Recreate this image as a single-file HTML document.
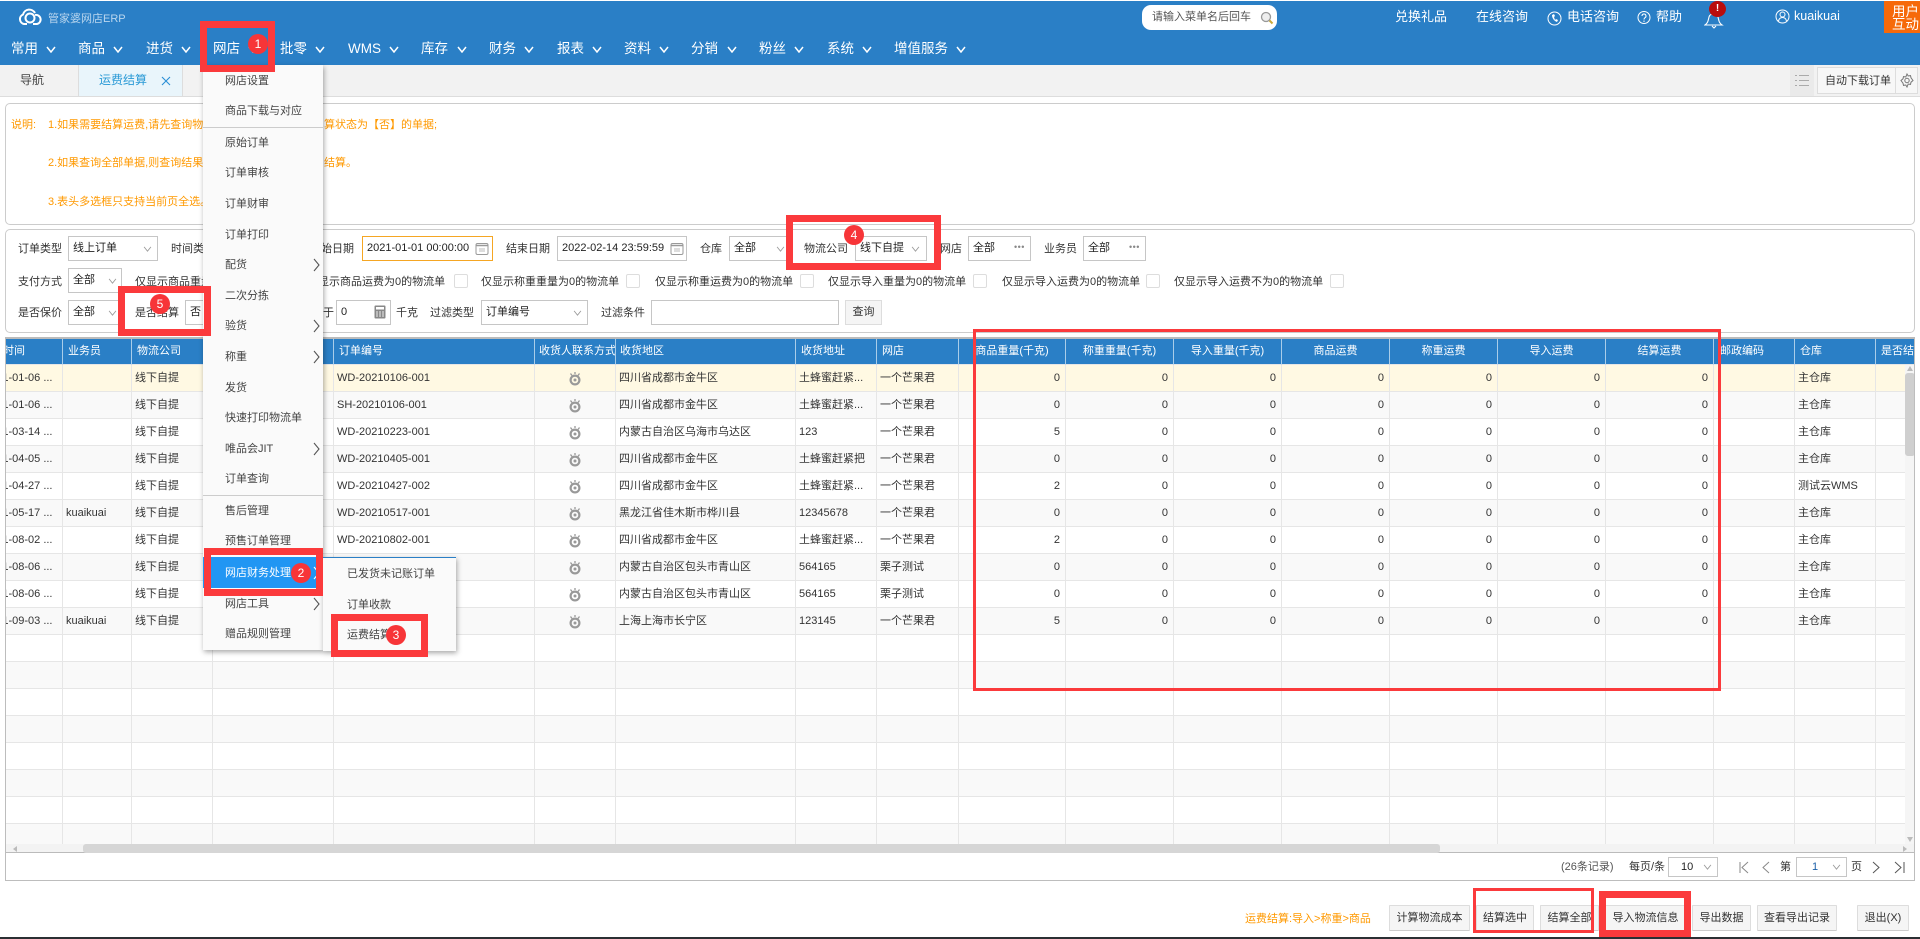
<!DOCTYPE html>
<html lang="zh-CN"><head><meta charset="utf-8"><title>运费结算</title>
<style>
*{box-sizing:border-box}
html,body{margin:0;padding:0;width:1920px;height:939px;overflow:hidden;background:#fff}
body{position:relative;font:11px/16px "Liberation Sans","Noto Sans CJK SC",sans-serif;color:#333}
.t{position:absolute;white-space:nowrap;line-height:16px}
.a{position:absolute}
.hd{position:absolute;left:0;top:1px;width:1920px;height:64px;background:#2a7fc6}
.n{position:absolute;top:39px;color:#fff;font-size:13.5px;line-height:18px;white-space:nowrap}
.ch{position:absolute;width:10px;height:7px;fill:none;stroke:#fff;stroke-width:1.5}
.w{position:absolute;top:9px;color:#fff;font-size:13px;line-height:16px;white-space:nowrap}
.box{position:absolute;border:1px solid #ccc;border-radius:5px;background:#fff}
.in{position:absolute;border:1px solid #c6c6c6;background:#fff;height:25px;line-height:23px;padding-left:4px;white-space:nowrap;overflow:hidden;color:#222}
.sa{position:absolute;width:9px;height:6px;fill:none;stroke:#999;stroke-width:1}
.cb{position:absolute;width:14px;height:14px;border:1px solid #ddd;border-radius:2px;background:#fff}
.o{color:#f90}
.wrap{position:absolute;left:5px;top:337px;width:1910px;height:544px;border:1px solid #bdbdbd;border-top:2px solid #bbb;background:#fff;overflow:hidden}
table{border-collapse:separate;border-spacing:0;table-layout:fixed;width:1952px}
th{height:26px;background:#2a7fc6;color:#fff;font-weight:400;font-size:11px;padding:0 0 1px 5px;text-align:left;border-right:1px solid #a9cde9;border-bottom:1px solid #e6e6e6;white-space:nowrap;overflow:hidden}
th.c{text-align:center;padding:0 0 1px}
td{height:27px;border-right:1px solid #e6e6e6;border-bottom:1px solid #e6e6e6;font-size:11px;padding:0 0 0 3px;white-space:nowrap;overflow:hidden;color:#333}
td.r{text-align:right;padding:0 5px 0 0}
td.i{padding:0;text-align:center}
td.f{padding:0;text-indent:-22px}
tr.y td{background:#fff9e3}
tr.g td{background:#f9f9f9}
.ck{width:14px;height:15px;display:inline-block;vertical-align:middle}
.menu{position:absolute;background:#fafafa;box-shadow:1px 2px 5px rgba(0,0,0,.35)}
.mi{position:absolute;left:22px;white-space:nowrap;line-height:16px;color:#444}
.ar{position:absolute;left:110px;width:7px;height:14px;fill:none;stroke:#555;stroke-width:1.1}
.btn{position:absolute;top:905px;height:26px;border:1px solid #ddd;border-bottom-color:#ccc;background:#f5f5f5;text-align:center;line-height:24px;white-space:nowrap;color:#333;border-radius:1px}
.rb{position:absolute;border:7px solid #fb3a3c}
.bd{position:absolute;width:20px;height:20px;border-radius:50%;background:#f73538;color:#fff;text-align:center;line-height:20px;font-size:12px}
</style></head><body>
<svg width="0" height="0" style="position:absolute"><defs>
<symbol id="chev" viewBox="0 0 10 7"><path d="M1 1l4 5 4-5"/></symbol>
<symbol id="clk" viewBox="0 0 14 15"><circle cx="7" cy="9" r="4.400" fill="none" stroke="#999" stroke-width="2.200"/><circle cx="7" cy="9" r="1.500" fill="#999"/><path d="M2.500 2.500l1.500 2M11.500 2.500l-1.500 2M7 1v2" stroke="#999" stroke-width="1.300"/></symbol>
</defs></svg>

<div class="hd">
<svg class="a" style="left:18px;top:7px" width="29" height="18" viewBox="0 0 29 18" fill="none" stroke="#fff" stroke-width="2"><path d="M9 16H6a5 5 0 0 1-1-9.500A6.500 6.500 0 0 1 17 5"/><circle cx="12" cy="10" r="4.500"/><path d="M17 7a4.500 4.500 0 1 1 2 9h-4"/></svg>
<div class="t" style="left:48px;top:10px;color:#b9d6ee;font-size:11px">管家婆网店ERP</div>
<div class="n" style="left:11px">常用</div><svg class="ch" style="left:46px;top:45px"><use href="#chev"/></svg>
<div class="n" style="left:78px">商品</div><svg class="ch" style="left:113px;top:45px"><use href="#chev"/></svg>
<div class="n" style="left:146px">进货</div><svg class="ch" style="left:181px;top:45px"><use href="#chev"/></svg>
<div class="n" style="left:213px">网店</div><svg class="ch" style="left:248px;top:45px"><use href="#chev"/></svg>
<div class="n" style="left:280px">批零</div><svg class="ch" style="left:315px;top:45px"><use href="#chev"/></svg>
<div class="n" style="left:348px">WMS</div><svg class="ch" style="left:389px;top:45px"><use href="#chev"/></svg>
<div class="n" style="left:421px">库存</div><svg class="ch" style="left:457px;top:45px"><use href="#chev"/></svg>
<div class="n" style="left:489px">财务</div><svg class="ch" style="left:524px;top:45px"><use href="#chev"/></svg>
<div class="n" style="left:557px">报表</div><svg class="ch" style="left:592px;top:45px"><use href="#chev"/></svg>
<div class="n" style="left:624px">资料</div><svg class="ch" style="left:659px;top:45px"><use href="#chev"/></svg>
<div class="n" style="left:691px">分销</div><svg class="ch" style="left:727px;top:45px"><use href="#chev"/></svg>
<div class="n" style="left:759px">粉丝</div><svg class="ch" style="left:794px;top:45px"><use href="#chev"/></svg>
<div class="n" style="left:827px">系统</div><svg class="ch" style="left:862px;top:45px"><use href="#chev"/></svg>
<div class="n" style="left:894px">增值服务</div><svg class="ch" style="left:956px;top:45px"><use href="#chev"/></svg>
</div>

<div class="a" style="left:1142px;top:5px;width:135px;height:25px;background:#fff;border-radius:9px"></div>
<div class="t" style="left:1152px;top:9px;color:#555">请输入菜单名后回车</div>
<svg class="a" style="left:1260px;top:11px" width="16" height="14" viewBox="0 0 16 14"><circle cx="6" cy="6" r="4.500" fill="#eee" stroke="#999" stroke-width="1.300"/><path d="M9.500 9.500l3 3" stroke="#c9a93a" stroke-width="2"/></svg>
<div class="w" style="left:1395px">兑换礼品</div>
<div class="w" style="left:1476px">在线咨询</div>
<svg class="a" style="left:1547px;top:11px" width="15" height="15" viewBox="0 0 15 15" fill="none" stroke="#fff"><circle cx="7.500" cy="7.500" r="6.500"/><path d="M5 4c0 3 2 6 5 7l1-2-2-1-1 1-1-3 1-1-1-2z" fill="#fff" stroke="none"/></svg>
<div class="w" style="left:1567px">电话咨询</div>
<svg class="a" style="left:1637px;top:10px" width="14" height="15" viewBox="0 0 14 15" fill="none" stroke="#fff"><circle cx="7" cy="7.500" r="6"/><path d="M5 6a2 2 0 1 1 3 1.700c-.7.500-1 .8-1 1.800M7 10.500v1.500"/></svg>
<div class="w" style="left:1656px">帮助</div>
<svg class="a" style="left:1704px;top:12px" width="20" height="18" viewBox="0 0 20 18" fill="none" stroke="#fff" stroke-width="1.100"><path d="M1 13c3-2 3-4 4-8 1-4 8-4 9 0 1 4 1 6 4 8H1zM8 14l2 2 2-2"/></svg>
<div class="a" style="left:1709px;top:1px;width:17px;height:16px;border-radius:50%;background:#b90c0c;color:#fff;text-align:center;line-height:16px;font-size:10px;font-weight:700">!</div>
<svg class="a" style="left:1775px;top:9px" width="15" height="15" viewBox="0 0 15 15" fill="none" stroke="#fff"><circle cx="7.500" cy="7.500" r="6.500"/><circle cx="7.500" cy="5.500" r="2.500"/><path d="M3.500 12c.5-2.500 2-3.500 4-3.500s3.500 1 4 3.500"/></svg>
<div class="w" style="left:1794px;top:8px;font-size:12.5px">kuaikuai</div>
<div class="a" style="left:1884px;top:1px;width:36px;height:32px;background:#f6690a;color:#fff;font-size:13.5px;line-height:13px;padding:4px 0 0 8px">用户<br>互动</div>

<!-- tabs -->
<div class="a" style="left:0;top:65px;width:1920px;height:32px;background:#f2f2f2;border-bottom:1px solid #ddd"></div>
<div class="t" style="left:20px;top:72px;font-size:12px;color:#444">导航</div>
<div class="a" style="left:78px;top:65px;width:105px;height:31px;background:#e9f5fb;border-left:1px solid #ddd;border-right:1px solid #ddd"></div>
<div class="t" style="left:99px;top:72px;font-size:12px;color:#2a9ad6">运费结算</div>
<svg class="a" style="left:161px;top:76px" width="10" height="10" viewBox="0 0 10 10" stroke="#2a8fd6" stroke-width="1.100"><path d="M1 1l8 8M9 1l-8 8"/></svg>
<div class="a" style="left:1790px;top:65px;width:24px;height:31px;background:#eaeaea"></div>
<svg class="a" style="left:1795px;top:74px" width="15" height="13" viewBox="0 0 15 13" stroke="#aaa"><path d="M4 1.500h10M4 6.500h10M4 11.500h10M0 1.500h2M0 6.500h2M0 11.500h2"/></svg>
<div class="a" style="left:1817px;top:67px;width:101px;height:27px;background:#f7f7f7;border:1px solid #ddd"></div>
<div class="a" style="left:1895px;top:67px;width:1px;height:27px;background:#ddd"></div>
<div class="t" style="left:1825px;top:73px;color:#333">自动下载订单</div>
<svg class="a" style="left:1900px;top:73px" width="14" height="15" viewBox="0 0 14 15" fill="none" stroke="#777"><circle cx="7" cy="7.500" r="2.200"/><path d="M7 1l1.200 2 2.300-.4.500 2.200L13 7.500l-2 1.700-.5 2.200-2.300-.4L7 14l-1.200-2-2.300.4-.5-2.200L1 7.500l2-1.700.5-2.200 2.300.4z"/></svg>

<!-- notice -->
<div class="box" style="left:5px;top:103px;width:1910px;height:122px"></div>
<div class="t o" style="left:11px;top:117px">说明:</div>
<div class="t o" style="left:48px;top:117px">1.如果需要结算运费,请先查询物流</div>
<div class="t o" style="left:324px;top:117px">算状态为【否】的单据;</div>
<div class="t o" style="left:48px;top:155px">2.如果查询全部单据,则查询结果</div>
<div class="t o" style="left:324px;top:155px">结算。</div>
<div class="t o" style="left:48px;top:194px">3.表头多选框只支持当前页全选。</div>

<!-- filter -->
<div class="box" style="left:5px;top:229px;width:1910px;height:104px"></div>
<div class="t" style="left:18px;top:241px">订单类型</div>
<div class="in" style="left:68px;top:236px;width:90px">线上订单</div><svg class="sa" style="left:143px;top:246px"><use href="#chev"/></svg>
<div class="t" style="left:171px;top:241px">时间类型</div>
<div class="t" style="left:310px;top:241px">开始日期</div>
<div class="in" style="left:362px;top:236px;width:131px;border-color:#f5a623">2021-01-01 00:00:00</div>
<svg class="a" style="left:475px;top:242px" width="14" height="13" viewBox="0 0 14 13" fill="none" stroke="#999"><rect x="1" y="1.500" width="12" height="11" rx="1.500"/><path d="M1 3.500h12" stroke-width="1.500"/><path d="M5 6v4M7 6v4M9 6v4" stroke="#bbb"/></svg>
<div class="t" style="left:506px;top:241px">结束日期</div>
<div class="in" style="left:557px;top:236px;width:130px">2022-02-14 23:59:59</div>
<svg class="a" style="left:670px;top:242px" width="14" height="13" viewBox="0 0 14 13" fill="none" stroke="#999"><rect x="1" y="1.500" width="12" height="11" rx="1.500"/><path d="M1 3.500h12" stroke-width="1.500"/><path d="M5 6v4M7 6v4M9 6v4" stroke="#bbb"/></svg>
<div class="t" style="left:700px;top:241px">仓库</div>
<div class="in" style="left:729px;top:236px;width:62px">全部</div><svg class="sa" style="left:776px;top:246px"><use href="#chev"/></svg>
<div class="t" style="left:804px;top:241px">物流公司</div>
<div class="in" style="left:855px;top:236px;width:72px">线下自提</div><svg class="sa" style="left:911px;top:246px"><use href="#chev"/></svg>
<div class="t" style="left:940px;top:241px">网店</div>
<div class="in" style="left:968px;top:236px;width:63px">全部</div><div class="t" style="left:1014px;top:239px;color:#888;font-size:9px;letter-spacing:.5px">•••</div>
<div class="t" style="left:1044px;top:241px">业务员</div>
<div class="in" style="left:1083px;top:236px;width:63px">全部</div><div class="t" style="left:1129px;top:239px;color:#888;font-size:9px;letter-spacing:.5px">•••</div>

<div class="t" style="left:18px;top:274px">支付方式</div>
<div class="in" style="left:68px;top:268px;width:54px">全部</div><svg class="sa" style="left:108px;top:278px"><use href="#chev"/></svg>
<div class="t" style="left:135px;top:274px">仅显示商品重量为0的物流单</div>
<div class="t" style="left:307px;top:274px">仅显示商品运费为0的物流单</div><div class="cb" style="left:454px;top:274px"></div>
<div class="t" style="left:481px;top:274px">仅显示称重重量为0的物流单</div><div class="cb" style="left:626px;top:274px"></div>
<div class="t" style="left:655px;top:274px">仅显示称重运费为0的物流单</div><div class="cb" style="left:800px;top:274px"></div>
<div class="t" style="left:828px;top:274px">仅显示导入重量为0的物流单</div><div class="cb" style="left:973px;top:274px"></div>
<div class="t" style="left:1002px;top:274px">仅显示导入运费为0的物流单</div><div class="cb" style="left:1146px;top:274px"></div>
<div class="t" style="left:1174px;top:274px">仅显示导入运费不为0的物流单</div><div class="cb" style="left:1330px;top:274px"></div>

<div class="t" style="left:18px;top:305px">是否保价</div>
<div class="in" style="left:68px;top:300px;width:54px">全部</div><svg class="sa" style="left:108px;top:310px"><use href="#chev"/></svg>
<div class="t" style="left:135px;top:305px">是否结算</div>
<div class="in" style="left:185px;top:300px;width:60px">否</div>
<div class="t" style="left:323px;top:305px">于</div>
<div class="in" style="left:336px;top:300px;width:55px">0</div>
<svg class="a" style="left:374px;top:305px" width="12" height="14" viewBox="0 0 12 14"><rect x=".5" y=".5" width="11" height="13" rx="1" fill="#888"/><rect x="2" y="2" width="8" height="2.500" fill="#fff"/><path d="M2 7h8M2 9h8M2 11h8" stroke="#eee" stroke-dasharray="2 1"/></svg>
<div class="t" style="left:396px;top:305px">千克</div>
<div class="t" style="left:430px;top:305px">过滤类型</div>
<div class="in" style="left:481px;top:300px;width:107px">订单编号</div><svg class="sa" style="left:573px;top:310px"><use href="#chev"/></svg>
<div class="t" style="left:601px;top:305px">过滤条件</div>
<div class="in" style="left:651px;top:300px;width:188px"></div>
<div class="a" style="left:845px;top:300px;width:37px;height:25px;background:#f5f5f5;border:1px solid #ddd;text-align:center;line-height:23px">查询</div>

<!-- grid -->
<div class="wrap">
<table><colgroup><col style="width:57px"><col style="width:69px"><col style="width:81px"><col style="width:121px"><col style="width:201px"><col style="width:81px"><col style="width:180px"><col style="width:81px"><col style="width:82px"><col style="width:107px"><col style="width:108px"><col style="width:108px"><col style="width:108px"><col style="width:108px"><col style="width:108px"><col style="width:108px"><col style="width:81px"><col style="width:81px"><col style="width:82px"></colgroup>
<tr><th style="padding:0 0 1px;text-indent:-25px">制单时间</th><th>业务员</th><th>物流公司</th><th>单据类型</th><th>订单编号</th><th style="padding-left:4px">收货人联系方式</th><th style="padding-left:4px">收货地区</th><th>收货地址</th><th>网店</th><th class="c">商品重量(千克)</th><th class="c">称重重量(千克)</th><th class="c">导入重量(千克)</th><th class="c">商品运费</th><th class="c">称重运费</th><th class="c">导入运费</th><th class="c">结算运费</th><th style="padding:0 0 1px;text-indent:6px">邮政编码</th><th>仓库</th><th>是否结算</th></tr>
<tr class="y"><td class="f">2021-01-06 ...</td><td></td><td>线下自提</td><td></td><td>WD-20210106-001</td><td class="i"><svg class="ck"><use href="#clk"/></svg></td><td>四川省成都市金牛区</td><td>土蜂蜜赶紧...</td><td>一个芒果君</td><td class="r">0</td><td class="r">0</td><td class="r">0</td><td class="r">0</td><td class="r">0</td><td class="r">0</td><td class="r">0</td><td></td><td>主仓库</td><td></td></tr>
<tr class="g"><td class="f">2021-01-06 ...</td><td></td><td>线下自提</td><td></td><td>SH-20210106-001</td><td class="i"><svg class="ck"><use href="#clk"/></svg></td><td>四川省成都市金牛区</td><td>土蜂蜜赶紧...</td><td>一个芒果君</td><td class="r">0</td><td class="r">0</td><td class="r">0</td><td class="r">0</td><td class="r">0</td><td class="r">0</td><td class="r">0</td><td></td><td>主仓库</td><td></td></tr>
<tr><td class="f">2021-03-14 ...</td><td></td><td>线下自提</td><td></td><td>WD-20210223-001</td><td class="i"><svg class="ck"><use href="#clk"/></svg></td><td>内蒙古自治区乌海市乌达区</td><td>123</td><td>一个芒果君</td><td class="r">5</td><td class="r">0</td><td class="r">0</td><td class="r">0</td><td class="r">0</td><td class="r">0</td><td class="r">0</td><td></td><td>主仓库</td><td></td></tr>
<tr class="g"><td class="f">2021-04-05 ...</td><td></td><td>线下自提</td><td></td><td>WD-20210405-001</td><td class="i"><svg class="ck"><use href="#clk"/></svg></td><td>四川省成都市金牛区</td><td>土蜂蜜赶紧把</td><td>一个芒果君</td><td class="r">0</td><td class="r">0</td><td class="r">0</td><td class="r">0</td><td class="r">0</td><td class="r">0</td><td class="r">0</td><td></td><td>主仓库</td><td></td></tr>
<tr><td class="f">2021-04-27 ...</td><td></td><td>线下自提</td><td></td><td>WD-20210427-002</td><td class="i"><svg class="ck"><use href="#clk"/></svg></td><td>四川省成都市金牛区</td><td>土蜂蜜赶紧...</td><td>一个芒果君</td><td class="r">2</td><td class="r">0</td><td class="r">0</td><td class="r">0</td><td class="r">0</td><td class="r">0</td><td class="r">0</td><td></td><td>测试云WMS</td><td></td></tr>
<tr class="g"><td class="f">2021-05-17 ...</td><td>kuaikuai</td><td>线下自提</td><td></td><td>WD-20210517-001</td><td class="i"><svg class="ck"><use href="#clk"/></svg></td><td>黑龙江省佳木斯市桦川县</td><td>12345678</td><td>一个芒果君</td><td class="r">0</td><td class="r">0</td><td class="r">0</td><td class="r">0</td><td class="r">0</td><td class="r">0</td><td class="r">0</td><td></td><td>主仓库</td><td></td></tr>
<tr><td class="f">2021-08-02 ...</td><td></td><td>线下自提</td><td></td><td>WD-20210802-001</td><td class="i"><svg class="ck"><use href="#clk"/></svg></td><td>四川省成都市金牛区</td><td>土蜂蜜赶紧...</td><td>一个芒果君</td><td class="r">2</td><td class="r">0</td><td class="r">0</td><td class="r">0</td><td class="r">0</td><td class="r">0</td><td class="r">0</td><td></td><td>主仓库</td><td></td></tr>
<tr class="g"><td class="f">2021-08-06 ...</td><td></td><td>线下自提</td><td></td><td>WD-20210806-001</td><td class="i"><svg class="ck"><use href="#clk"/></svg></td><td>内蒙古自治区包头市青山区</td><td>564165</td><td>栗子测试</td><td class="r">0</td><td class="r">0</td><td class="r">0</td><td class="r">0</td><td class="r">0</td><td class="r">0</td><td class="r">0</td><td></td><td>主仓库</td><td></td></tr>
<tr><td class="f">2021-08-06 ...</td><td></td><td>线下自提</td><td></td><td>WD-20210806-002</td><td class="i"><svg class="ck"><use href="#clk"/></svg></td><td>内蒙古自治区包头市青山区</td><td>564165</td><td>栗子测试</td><td class="r">0</td><td class="r">0</td><td class="r">0</td><td class="r">0</td><td class="r">0</td><td class="r">0</td><td class="r">0</td><td></td><td>主仓库</td><td></td></tr>
<tr class="g"><td class="f">2021-09-03 ...</td><td>kuaikuai</td><td>线下自提</td><td></td><td>WD-20210903-001</td><td class="i"><svg class="ck"><use href="#clk"/></svg></td><td>上海上海市长宁区</td><td>123145</td><td>一个芒果君</td><td class="r">5</td><td class="r">0</td><td class="r">0</td><td class="r">0</td><td class="r">0</td><td class="r">0</td><td class="r">0</td><td></td><td>主仓库</td><td></td></tr>
<tr><td></td><td></td><td></td><td></td><td></td><td></td><td></td><td></td><td></td><td></td><td></td><td></td><td></td><td></td><td></td><td></td><td></td><td></td><td></td></tr>
<tr class="g"><td></td><td></td><td></td><td></td><td></td><td></td><td></td><td></td><td></td><td></td><td></td><td></td><td></td><td></td><td></td><td></td><td></td><td></td><td></td></tr>
<tr><td></td><td></td><td></td><td></td><td></td><td></td><td></td><td></td><td></td><td></td><td></td><td></td><td></td><td></td><td></td><td></td><td></td><td></td><td></td></tr>
<tr class="g"><td></td><td></td><td></td><td></td><td></td><td></td><td></td><td></td><td></td><td></td><td></td><td></td><td></td><td></td><td></td><td></td><td></td><td></td><td></td></tr>
<tr><td></td><td></td><td></td><td></td><td></td><td></td><td></td><td></td><td></td><td></td><td></td><td></td><td></td><td></td><td></td><td></td><td></td><td></td><td></td></tr>
<tr class="g"><td></td><td></td><td></td><td></td><td></td><td></td><td></td><td></td><td></td><td></td><td></td><td></td><td></td><td></td><td></td><td></td><td></td><td></td><td></td></tr>
<tr><td></td><td></td><td></td><td></td><td></td><td></td><td></td><td></td><td></td><td></td><td></td><td></td><td></td><td></td><td></td><td></td><td></td><td></td><td></td></tr>
<tr class="g"><td></td><td></td><td></td><td></td><td></td><td></td><td></td><td></td><td></td><td></td><td></td><td></td><td></td><td></td><td></td><td></td><td></td><td></td><td></td></tr>
</table>
<!-- vertical scrollbar -->
<div class="a" style="left:1899px;top:26px;width:10px;height:481px;background:#f5f5f5"></div>
<div class="a" style="left:1899px;top:34px;width:10px;height:83px;background:#cfcfcf;border-radius:3px"></div>
<div class="a" style="left:1901px;top:27px;width:0;height:0;border:3px solid transparent;border-top:0;border-bottom:5px solid #bbb"></div>
<div class="a" style="left:1901px;top:498px;width:0;height:0;border:3px solid transparent;border-bottom:0;border-top:5px solid #bbb"></div>
<!-- horizontal scrollbar -->
<div class="a" style="left:0;top:505px;width:1908px;height:9px;background:#f3f3f3;border-bottom:1px solid #bbb"></div>
<div class="a" style="left:77px;top:505px;width:1357px;height:9px;background:#d6d6d6;border-radius:3px"></div>
<div class="a" style="left:7px;top:507px;width:0;height:0;border:3px solid transparent;border-left:0;border-right:4px solid #bbb"></div>
<div class="a" style="left:1897px;top:507px;width:0;height:0;border:3px solid transparent;border-right:0;border-left:4px solid #bbb"></div>
<!-- pager area -->
<div class="a" style="left:0;top:515px;width:1908px;height:27px;background:#fff"></div>
</div>

<div class="t" style="left:1561px;top:859px;color:#555">(26条记录)</div>
<div class="t" style="left:1629px;top:859px">每页/条</div>
<div class="in" style="left:1668px;top:857px;width:50px;height:20px;line-height:18px;padding-left:12px">10</div><svg class="sa" style="left:1703px;top:864px"><use href="#chev"/></svg>
<svg class="a" style="left:1738px;top:861px" width="12" height="13" viewBox="0 0 12 13" fill="none" stroke="#888"><path d="M2 1v11M10 1L4 6.500l6 5.500"/></svg>
<svg class="a" style="left:1761px;top:861px" width="9" height="13" viewBox="0 0 9 13" fill="none" stroke="#888"><path d="M8 1L2 6.500l6 5.500"/></svg>
<div class="t" style="left:1780px;top:859px">第</div>
<div class="in" style="left:1796px;top:857px;width:51px;height:20px;line-height:18px;padding-left:15px;color:#1a5fa8">1</div><svg class="sa" style="left:1832px;top:864px"><use href="#chev"/></svg>
<div class="t" style="left:1851px;top:859px">页</div>
<svg class="a" style="left:1872px;top:861px" width="9" height="13" viewBox="0 0 9 13" fill="none" stroke="#555"><path d="M1 1l6 5.500L1 12"/></svg>
<svg class="a" style="left:1894px;top:861px" width="12" height="13" viewBox="0 0 12 13" fill="none" stroke="#555"><path d="M1 1l6 5.500L1 12M10 1v11"/></svg>

<!-- footer -->
<div class="t o" style="left:1245px;top:911px">运费结算:导入&gt;称重&gt;商品</div>
<div class="btn" style="left:1389px;width:81px">计算物流成本</div>
<div class="btn" style="left:1476px;width:58px">结算选中</div>
<div class="btn" style="left:1540px;width:59px">结算全部</div>
<div class="btn" style="left:1605px;width:81px">导入物流信息</div>
<div class="btn" style="left:1692px;width:59px">导出数据</div>
<div class="btn" style="left:1757px;width:80px">查看导出记录</div>
<div class="btn" style="left:1857px;width:52px">退出(X)</div>
<div class="a" style="left:0;top:937px;width:1920px;height:2px;background:#2b2f33"></div>

<!-- menu -->
<div class="menu" style="left:203px;top:65px;width:120px;height:585px">
<div class="mi" style="top:8px">网店设置</div>
<div class="mi" style="top:38px">商品下载与对应</div>
<div class="a" style="left:0;top:62px;width:120px;height:1px;background:#ccc"></div>
<div class="mi" style="top:70px">原始订单</div>
<div class="mi" style="top:100px">订单审核</div>
<div class="mi" style="top:131px">订单财审</div>
<div class="mi" style="top:162px">订单打印</div>
<div class="mi" style="top:192px">配货</div><svg class="ar" style="top:193px" viewBox="0 0 7 14"><path d="M1 1l5 6-5 6"/></svg>
<div class="mi" style="top:223px">二次分拣</div>
<div class="mi" style="top:253px">验货</div><svg class="ar" style="top:254px" viewBox="0 0 7 14"><path d="M1 1l5 6-5 6"/></svg>
<div class="mi" style="top:284px">称重</div><svg class="ar" style="top:285px" viewBox="0 0 7 14"><path d="M1 1l5 6-5 6"/></svg>
<div class="mi" style="top:315px">发货</div>
<div class="mi" style="top:345px">快速打印物流单</div>
<div class="mi" style="top:376px">唯品会JIT</div><svg class="ar" style="top:377px" viewBox="0 0 7 14"><path d="M1 1l5 6-5 6"/></svg>
<div class="mi" style="top:406px">订单查询</div>
<div class="a" style="left:0;top:430px;width:120px;height:1px;background:#ccc"></div>
<div class="mi" style="top:438px">售后管理</div>
<div class="mi" style="top:468px">预售订单管理</div>
<div class="a" style="left:0;top:492px;width:120px;height:31px;background:#2196f3"></div>
<div class="mi" style="top:500px;color:#fff">网店财务处理</div><svg class="ar" style="top:501px;stroke:#fff" viewBox="0 0 7 14"><path d="M1 1l5 6-5 6"/></svg>
<div class="mi" style="top:531px">网店工具</div><svg class="ar" style="top:532px" viewBox="0 0 7 14"><path d="M1 1l5 6-5 6"/></svg>
<div class="mi" style="top:561px">赠品规则管理</div>
</div>
<div class="menu" style="left:323px;top:557px;width:133px;height:94px;border-top:1px solid #2a7fc6">
<div class="mi" style="left:24px;top:8px">已发货未记账订单</div>
<div class="mi" style="left:24px;top:39px">订单收款</div>
<div class="mi" style="left:24px;top:69px">运费结算</div>
</div>

<!-- annotations -->
<div class="rb" style="left:200px;top:21px;width:75px;height:51px"></div>
<div class="rb" style="left:204px;top:548px;width:119px;height:48px"></div>
<div class="rb" style="left:331px;top:614px;width:97px;height:43px"></div>
<div class="rb" style="left:786px;top:215px;width:155px;height:55px"></div>
<div class="rb" style="left:118px;top:286px;width:93px;height:50px"></div>
<div class="rb" style="left:973px;top:329px;width:748px;height:362px;border-width:3px"></div>
<div class="rb" style="left:1473px;top:888px;width:121px;height:45px;border-width:3px"></div>
<div class="rb" style="left:1599px;top:891px;width:92px;height:46px"></div>
<div class="bd" style="left:248px;top:34px">1</div>
<div class="bd" style="left:291px;top:563px">2</div>
<div class="bd" style="left:386px;top:625px">3</div>
<div class="bd" style="left:844px;top:225px">4</div>
<div class="bd" style="left:150px;top:294px">5</div>
</body></html>
